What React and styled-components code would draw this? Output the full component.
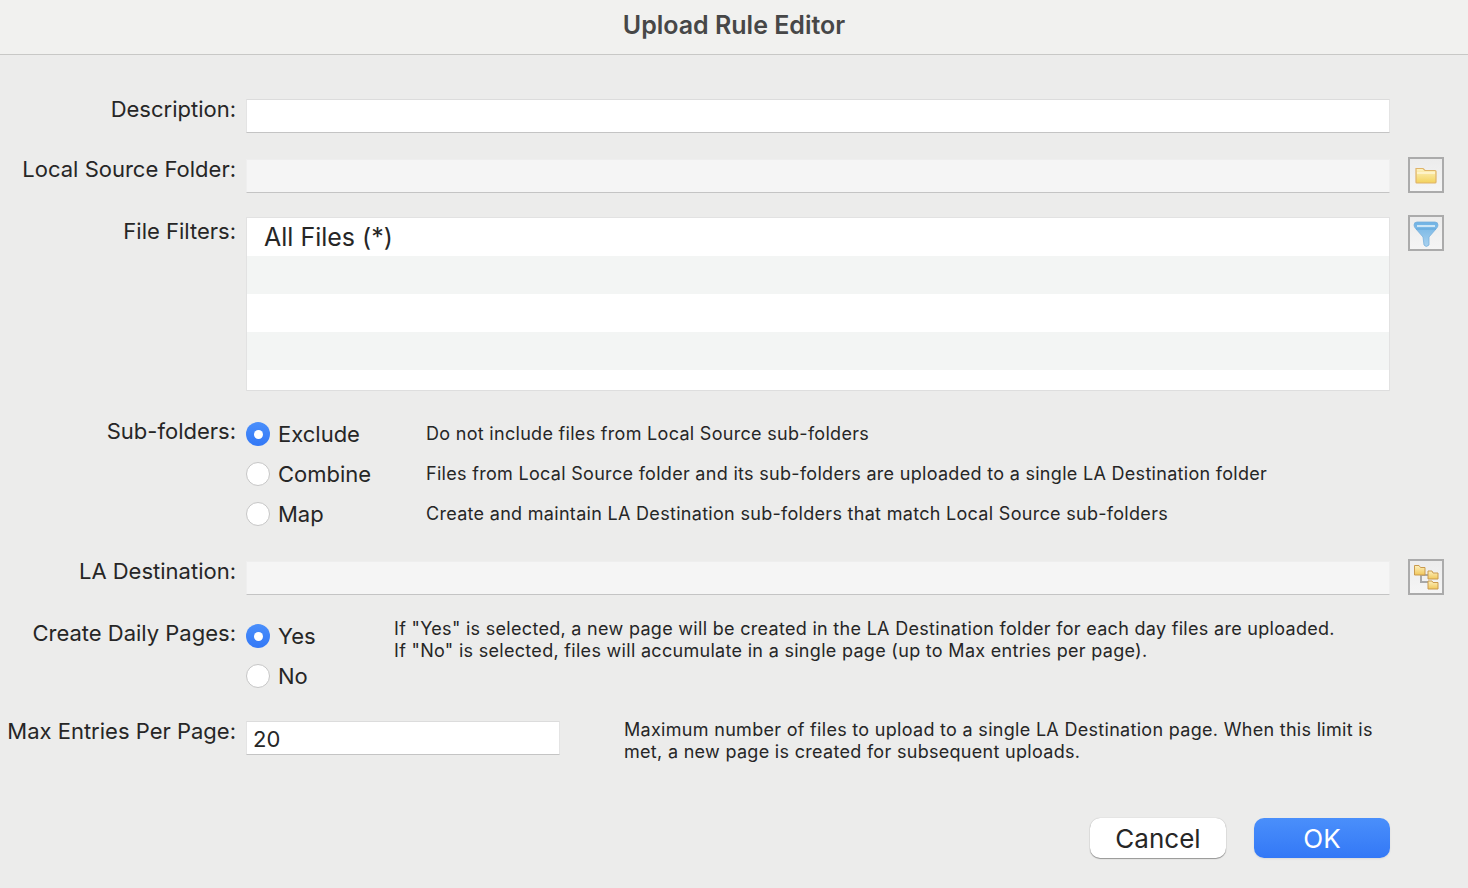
import React from 'react';
import styled, { createGlobalStyle } from 'styled-components';

const Global = createGlobalStyle`
  html, body {
    margin: 0;
    padding: 0;
    background: #ececeb;
    font-family: Inter, "Liberation Sans", sans-serif;
    color: #262626;
  }
`;

const Page = styled.div`
  width: 1468px;
  height: 888px;
  overflow: hidden;
`;

const TitleBar = styled.header`
  height: 54px;
  background: #f1f1ef;
  border-bottom: 1px solid #c8c8c6;
  display: flex;
  align-items: center;
  justify-content: center;
  padding-left: 0;
  > h1 {
    margin: 0 0 4px;
    font-size: 25px;
    font-weight: 600;
    color: #474747;
    letter-spacing: 0;
  }
`;

const Form = styled.main`
  display: flex;
  flex-direction: column;
  padding-top: 44px;
`;

const Row = styled.div`
  display: grid;
  grid-template-columns: 236px 1144px 36px;
  column-gap: 10px;
  column-gap: 10px;
  margin-top: ${(p) => p.$top || 0}px;
  height: ${(p) => p.$height}px;
`;

const Label = styled.label`
  font-size: 22px;
  line-height: 28px;
  text-align: right;
  white-space: nowrap;
  margin-top: ${(p) => p.$top ?? -4}px;
`;

const TextBox = styled.div`
  background: ${(p) => (p.$disabled ? '#f5f5f5' : '#fff')};
  border-top: 1px solid ${(p) => (p.$disabled ? '#eeeeee' : '#dcdcdc')};
  border-bottom: 1px solid #c4c4c4;
  border-left: 1px solid ${(p) => (p.$disabled ? '#efefef' : '#e4e4e4')};
  border-right: 1px solid ${(p) => (p.$disabled ? '#efefef' : '#e4e4e4')};
  box-sizing: border-box;
  height: 34px;
  font-size: 22px;
  line-height: 34px;
  padding-left: 6px;
  width: ${(p) => (p.$width ? `${p.$width}px` : 'auto')};
`;

const IconButton = styled.button`
  width: 36px;
  height: 36px;
  margin: -2px 0 0 8px;
  padding: 0;
  box-sizing: border-box;
  border: 2px solid #ababab;
  background: linear-gradient(#ececec, #f5f5f5);
  display: flex;
  align-items: center;
  justify-content: center;
`;

const FilterList = styled.div`
  border: 1px solid #e2e2e2;
  border-bottom-color: #dedede;
  box-sizing: border-box;
  height: 174px;
  background: #fff;
  overflow: hidden;
`;

const FilterRow = styled.div`
  height: 38px;
  background: ${(p) => (p.$alt ? '#f3f5f4' : '#fff')};
  font-size: 25px;
  line-height: 38px;
  padding-left: 17px;
`;

const OptionList = styled.div`
  display: flex;
  flex-direction: column;
  grid-column: 2 / 4;
`;

const OptionRow = styled.div`
  height: 40px;
  display: flex;
  align-items: center;
`;

const Radio = styled.span`
  width: 24px;
  height: 24px;
  box-sizing: border-box;
  flex: none;
  border-radius: 50%;
  display: flex;
  align-items: center;
  justify-content: center;
  background: ${(p) => (p.$on ? 'linear-gradient(#4a8ffb, #3378f6)' : '#fff')};
  border: ${(p) => (p.$on ? 'none' : '1px solid #c6c6c6')};
  &::after {
    content: '';
    display: ${(p) => (p.$on ? 'block' : 'none')};
    width: 9px;
    height: 9px;
    border-radius: 50%;
    background: #fff;
  }
`;

const OptionName = styled.span`
  width: ${(p) => p.$width}px;
  margin-left: 8px;
  font-size: 22px;
  flex: none;
`;

const Hint = styled.p`
  margin: 0;
  font-size: 18px;
  line-height: 22px;
  letter-spacing: 0.3px;
  white-space: pre-line;
`;

const SideHint = styled(Hint)`
  margin: ${(p) => p.$top}px 0 0 ${(p) => p.$left}px;
`;

const Split = styled.div`
  display: flex;
  grid-column: 2 / 4;
`;

const Footer = styled.footer`
  display: flex;
  justify-content: flex-end;
  gap: 28px;
  margin-top: 63px;
  padding-right: 78px;
`;

const Button = styled.button`
  width: 136px;
  height: 40px;
  border-radius: 10px;
  font-family: inherit;
  font-size: 26px;
  padding: 0;
  border: none;
  color: ${(p) => (p.$primary ? '#fff' : '#262626')};
  background: ${(p) => (p.$primary ? 'linear-gradient(#4a8ffb, #3378f6)' : '#fff')};
  box-shadow: ${(p) => (p.$primary ? '0 1px 2px rgba(0,0,0,.08)' : '0 0 1px rgba(0,0,0,.3), 0 1px 1px rgba(0,0,0,.35)')};
`;

const FolderIcon = () => (
  <svg width="22" height="18" viewBox="0 0 22 18">
    <defs>
      <linearGradient id="fold" x1="0" y1="0" x2="0" y2="1">
        <stop offset="0" stopColor="#fdf3c4" />
        <stop offset="1" stopColor="#f3d25c" />
      </linearGradient>
    </defs>
    <path d="M1 2.5 L8 2.5 L10 4.5 L20 4.5 Q21 4.5 21 5.5 L21 16 Q21 17 20 17 L2 17 Q1 17 1 16 Z" fill="url(#fold)" stroke="#dfb46a" strokeWidth="1.2" />
    <path d="M2 7 L20 7" stroke="#fff7d8" strokeWidth="1.4" />
  </svg>
);

const FunnelIcon = () => (
  <svg width="26" height="32" viewBox="0 0 26 32">
    <defs>
      <linearGradient id="fun" x1="0" y1="0" x2="0" y2="1">
        <stop offset="0" stopColor="#6fb2e4" />
        <stop offset="1" stopColor="#a9d2ef" />
      </linearGradient>
    </defs>
    <path d="M1 8 Q1 5 4 5 L22 5 Q25 5 25 8 Q25 10 23 12 L16 20 L16 28 Q13 31 11 28 L10 20 L3 12 Q1 10 1 8 Z" fill="url(#fun)" stroke="#79b0dc" strokeWidth="0.8" />
    <path d="M4 9 L22 9" stroke="#e3f2fb" strokeWidth="1.6" />
    <path d="M3 12 L23 12" stroke="#3f8fd0" strokeWidth="0.8" opacity="0.6" />
  </svg>
);

const TreeIcon = () => (
  <svg width="26" height="26" viewBox="0 0 26 26">
    <defs>
      <linearGradient id="tree" x1="0" y1="0" x2="0" y2="1">
        <stop offset="0" stopColor="#fdf0bd" />
        <stop offset="1" stopColor="#f1c75a" />
      </linearGradient>
    </defs>
    <path d="M8 10 L8 18 L16 18 M8 11 L16 11" stroke="#a8a8a8" strokeWidth="2" fill="none" />
    <path d="M1.5 1.5 L6 1.5 L7.500 3.500 L12 3.500 L12 11 L1.500 11 Z" fill="url(#tree)" stroke="#c99a4e" />
    <path d="M15 7 L19 7 L20 9 L25 9 L25 15 L15 15 Z" fill="url(#tree)" stroke="#c99a4e" />
    <path d="M15 17 L19 17 L20 18.500 L25 18.500 L25 25 L15 25 Z" fill="url(#tree)" stroke="#c99a4e" />
  </svg>
);

export default function App() {
  return (
    <Page>
      <Global />
      <TitleBar>
        <h1>Upload Rule Editor</h1>
      </TitleBar>
      <Form>
        <Row $height={34}>
          <Label>Description:</Label>
          <TextBox />
        </Row>
        <Row $top={26} $height={34}>
          <Label>Local Source Folder:</Label>
          <TextBox $disabled />
          <IconButton><FolderIcon /></IconButton>
        </Row>
        <Row $top={24} $height={174}>
          <Label $top={0}>File Filters:</Label>
          <FilterList>
            <FilterRow>All Files (*)</FilterRow>
            <FilterRow $alt />
            <FilterRow />
            <FilterRow $alt />
          </FilterList>
          <IconButton><FunnelIcon /></IconButton>
        </Row>
        <Row $top={23} $height={120}>
          <Label $top={3}>Sub-folders:</Label>
          <OptionList>
            <OptionRow>
              <Radio $on />
              <OptionName $width={148}>Exclude</OptionName>
              <Hint>Do not include files from Local Source sub-folders</Hint>
            </OptionRow>
            <OptionRow>
              <Radio />
              <OptionName $width={148}>Combine</OptionName>
              <Hint>Files from Local Source folder and its sub-folders are uploaded to a single LA Destination folder</Hint>
            </OptionRow>
            <OptionRow>
              <Radio />
              <OptionName $width={148}>Map</OptionName>
              <Hint>Create and maintain LA Destination sub-folders that match Local Source sub-folders</Hint>
            </OptionRow>
          </OptionList>
        </Row>
        <Row $top={27} $height={34}>
          <Label>LA Destination:</Label>
          <TextBox $disabled />
          <IconButton><TreeIcon /></IconButton>
        </Row>
        <Row $top={21} $height={80}>
          <Label $top={3}>Create Daily Pages:</Label>
          <Split>
            <OptionList>
              <OptionRow>
                <Radio $on />
                <OptionName $width={116}>Yes</OptionName>
              </OptionRow>
              <OptionRow>
                <Radio />
                <OptionName $width={116}>No</OptionName>
              </OptionRow>
            </OptionList>
            <SideHint $top={2} $left={0}>{'If "Yes" is selected, a new page will be created in the LA Destination folder for each day files are uploaded.\nIf "No" is selected, files will accumulate in a single page (up to Max entries per page).'}</SideHint>
          </Split>
        </Row>
        <Row $top={25} $height={34}>
          <Label>Max Entries Per Page:</Label>
          <Split>
            <TextBox $width={314}>20</TextBox>
            <SideHint $top={-2} $left={64}>{'Maximum number of files to upload to a single LA Destination page. When this limit is\nmet, a new page is created for subsequent uploads.'}</SideHint>
          </Split>
        </Row>
        <Footer>
          <Button>Cancel</Button>
          <Button $primary>OK</Button>
        </Footer>
      </Form>
    </Page>
  );
}
